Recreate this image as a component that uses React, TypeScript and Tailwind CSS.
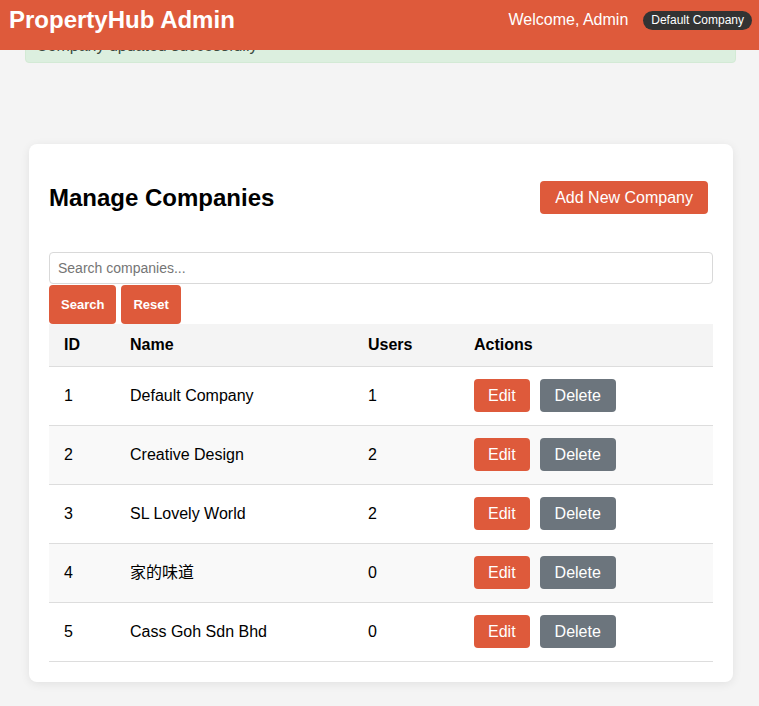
const companies = [
  { id: 1, name: "Default Company", users: 1 },
  { id: 2, name: "Creative Design", users: 2 },
  { id: 3, name: "SL Lovely World", users: 2 },
  { id: 4, name: "家的味道", users: 0 },
  { id: 5, name: "Cass Goh Sdn Bhd", users: 0 },
];

export default function App() {
  return (
    <div className="min-h-screen bg-[#f4f4f4] font-['Liberation_Sans','Noto_Sans_CJK_SC',sans-serif] text-black">
      <header className="fixed inset-x-0 top-0 z-10 h-[50px] bg-[#de5a3b] pl-[9px] pr-[7px] text-white">
        <div className="flex h-[40px] items-center justify-between">
          <h1 className="text-[24px] font-bold leading-[28px]">PropertyHub Admin</h1>
          <div className="flex items-center gap-[15px]">
            <span className="text-[16px]">Welcome, Admin</span>
            <span className="rounded-full bg-[#333333] px-[8px] py-[2px] text-[12px] leading-[15px]">
              Default Company
            </span>
          </div>
        </div>
      </header>

      <main className="pt-[25px] pb-[24px]">
        <div className="ml-[25px] mr-[23px] rounded-[4px] border border-[#d3ead5] bg-[#dcefdf] px-[10px] pt-[10px] pb-[6px] text-[16px] leading-[20px] text-[#3c4a3e]">
          Company updated successfully
        </div>

        <section className="mt-[81px] ml-[29px] mr-[26px] rounded-[8px] bg-white px-[20px] pt-[37px] pb-[20px] shadow-[0_2px_10px_rgba(0,0,0,0.08)]">
          <div className="flex h-[33px] items-center justify-between pr-[5px]">
            <h2 className="text-[24px] font-bold">Manage Companies</h2>
            <button className="h-[33px] rounded-[4px] bg-[#de5a3b] px-[15px] text-[16px] text-white">
              Add New Company
            </button>
          </div>

          <div className="mt-[38px]">
            <input
              placeholder="Search companies..."
              className="block h-[32px] w-full rounded-[4px] border border-[#d9d9d9] px-[8px] text-[14px] placeholder:text-[#757575] outline-none"
            />
            <div className="mt-[1px] flex gap-[5px]">
              <button className="h-[39px] rounded-[4px] bg-[#de5a3b] px-[12px] text-[13px] font-bold text-white">
                Search
              </button>
              <button className="h-[39px] rounded-[4px] bg-[#de5a3b] px-[12px] text-[13px] font-bold text-white">
                Reset
              </button>
            </div>
          </div>

          <table className="w-full border-collapse text-left text-[16px]">
            <thead>
              <tr className="border-b border-[#dddddd] bg-[#f4f4f4]">
                <th className="w-[66px] px-[15px] py-[12px] font-bold leading-[18px]">ID</th>
                <th className="w-[238px] px-[15px] py-[12px] font-bold leading-[18px]">Name</th>
                <th className="w-[106px] px-[15px] py-[12px] font-bold leading-[18px]">Users</th>
                <th className="px-[15px] py-[12px] font-bold leading-[18px]">Actions</th>
              </tr>
            </thead>
            <tbody>
              {companies.map((c) => (
                <tr key={c.id} className="border-b border-[#dddddd] even:bg-[#f9f9f9]">
                  <td className="px-[15px] pt-[12px] pb-[13px]">{c.id}</td>
                  <td className="px-[15px] pt-[12px] pb-[13px]">{c.name}</td>
                  <td className="px-[15px] pt-[12px] pb-[13px]">{c.users}</td>
                  <td className="px-[15px] pt-[12px] pb-[13px]">
                    <div className="flex gap-[10px]">
                      <button className="h-[33px] rounded-[4px] bg-[#de5a3b] px-[14px] text-white">
                        Edit
                      </button>
                      <button className="h-[33px] rounded-[4px] bg-[#6c757d] px-[15px] text-white">
                        Delete
                      </button>
                    </div>
                  </td>
                </tr>
              ))}
            </tbody>
          </table>
        </section>
      </main>
    </div>
  );
}
